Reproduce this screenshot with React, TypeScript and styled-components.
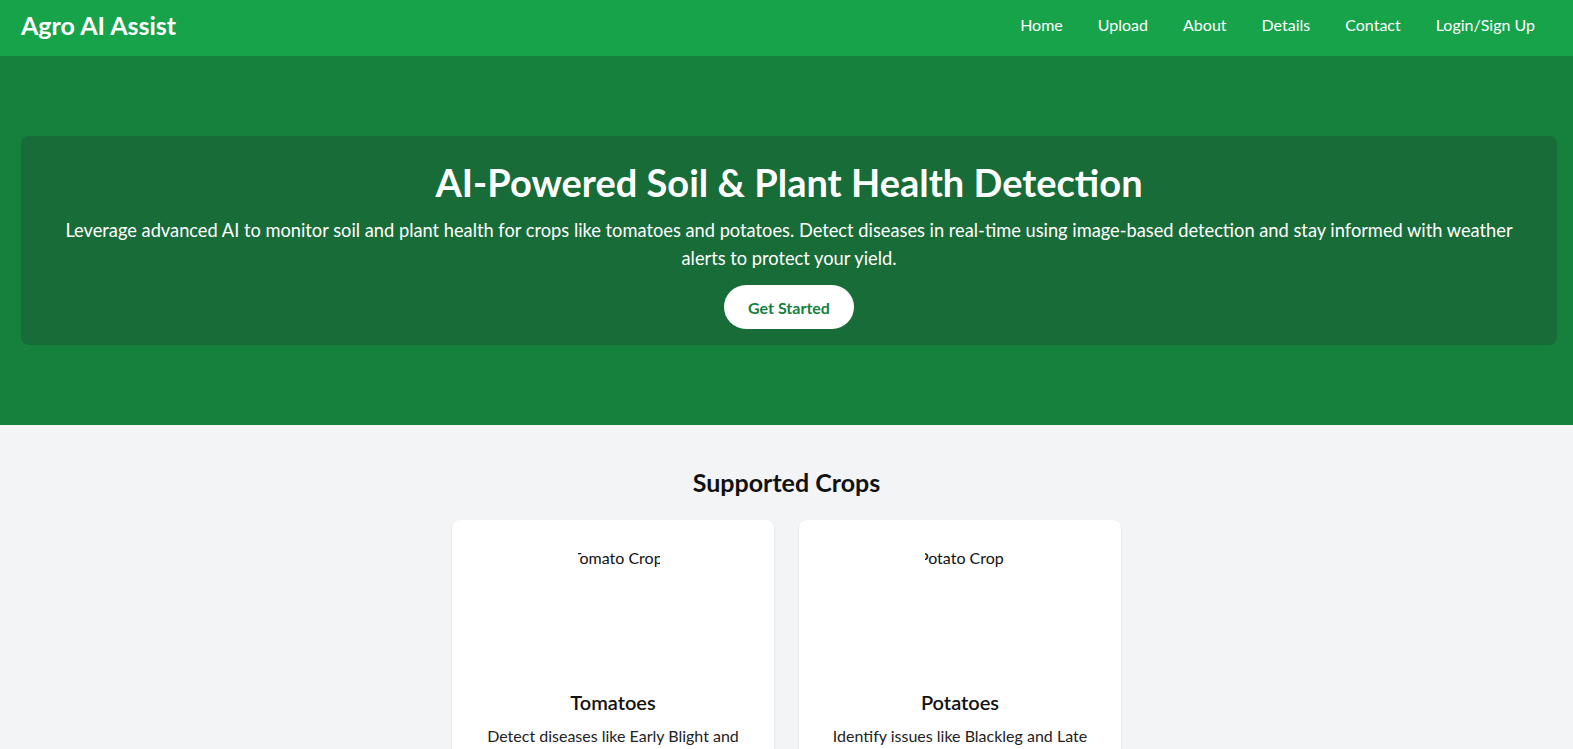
import React from 'react';
import styled, { createGlobalStyle } from 'styled-components';

const GlobalStyle = createGlobalStyle`
  * { box-sizing: border-box; }
  body {
    margin: 0;
    background: #f3f4f6;
    font-family: Lato, "Noto Sans", "Liberation Sans", sans-serif;
    color: #111;
  }
`;

interface ICrop {
  alt: string;
  name: string;
  text: string;
}

const crops: ICrop[] = [
  { alt: 'Tomato Crop', name: 'Tomatoes', text: 'Detect diseases like Early Blight and Late Blight in tomato leaves.' },
  { alt: 'Potato Crop', name: 'Potatoes', text: 'Identify issues like Blackleg and Late Blight in potato plants.' },
];

const links = ['Home', 'Upload', 'About', 'Details', 'Contact', 'Login/Sign Up'];

const CropCard: React.FC<{ crop: ICrop }> = ({ crop }) => (
  <Card>
    <ImgBox>
      <AltText>{crop.alt}</AltText>
    </ImgBox>
    <CardTitle>{crop.name}</CardTitle>
    <CardText>{crop.text}</CardText>
  </Card>
);

const App: React.FC = () => {
  return (
    <>
      <GlobalStyle />
      <Nav>
        <Logo>Agro AI Assist</Logo>
        <NavLinks>
          {links.map(l => (
            <NavLink key={l}>{l}</NavLink>
          ))}
        </NavLinks>
      </Nav>
      <Hero>
        <HeroBox>
          <HeroTitle>AI-Powered Soil &amp; Plant Health Detection</HeroTitle>
          <HeroText>
            Leverage advanced AI to monitor soil and plant health for crops like tomatoes and potatoes. Detect diseases in
            real-time using image-based detection and stay informed with weather alerts to protect your yield.
          </HeroText>
          <StartButton>Get Started</StartButton>
        </HeroBox>
      </Hero>
      <Crops>
        <SectionTitle>Supported Crops</SectionTitle>
        <CardRow>
          {crops.map(c => (
            <CropCard key={c.name} crop={c} />
          ))}
        </CardRow>
      </Crops>
    </>
  );
};
export default App;

const Nav = styled.nav`
  height: 56px;
  background: #17a34a;
  display: flex;
  align-items: center;
  justify-content: space-between;
  padding: 0 38px 0 21px;
  color: #fff;
`;

const Logo = styled.div`
  font-size: 25px;
  font-weight: 700;
  margin-top: -6px;
`;

const NavLinks = styled.div`
  display: flex;
  gap: 35px;
  margin-top: -8px;
`;

const NavLink = styled.a`
  font-size: 16px;
  color: #fff;
  cursor: pointer;
`;

const Hero = styled.section`
  background: #16803d;
  padding: 80px 16px 80px 21px;
`;

const HeroBox = styled.div`
  width: 1536px;
  max-width: 100%;
  background: #176c38;
  border-radius: 8px;
  padding: 24px 24px 16px;
  text-align: center;
  color: #fff;
`;

const HeroTitle = styled.h1`
  margin: 0 0 12px;
  font-size: 38px;
  line-height: 44px;
  font-weight: 700;
`;

const HeroText = styled.p`
  margin: 0 0 13px;
  font-size: 18.25px;
  line-height: 28px;
  padding: 0 20px;
`;

const StartButton = styled.button`
  height: 44px;
  width: 130px;
  border: none;
  border-radius: 999px;
  background: #fff;
  color: #15803d;
  font-family: inherit;
  font-size: 16px;
  font-weight: 700;
  cursor: pointer;
`;

const Crops = styled.section`
  padding: 40px 16px;
`;

const SectionTitle = styled.h2`
  margin: 0 0 21px;
  text-align: center;
  font-size: 25px;
  line-height: 34px;
  font-weight: 700;
`;

const CardRow = styled.div`
  display: flex;
  justify-content: center;
  gap: 25px;
`;

const Card = styled.div`
  width: 322px;
  background: #fff;
  border-radius: 8px;
  box-shadow: 0 1px 3px rgba(0, 0, 0, 0.08), 0 1px 2px rgba(0, 0, 0, 0.04);
  padding: 24px;
  text-align: center;
`;

/* broken image: only a clipped strip of the alt text shows */
const ImgBox = styled.div`
  width: 82px;
  height: 128px;
  margin: 0 0 16px 102px;
  overflow: hidden;
  display: flex;
  justify-content: flex-start;
`;

const AltText = styled.span`
  margin-left: -6px;
  font-size: 16px;
  line-height: 27px;
  white-space: nowrap;
  color: #111;
`;

const CardTitle = styled.h3`
  margin: 0 0 8px;
  font-size: 20px;
  line-height: 28px;
  font-weight: 600;
`;

const CardText = styled.p`
  margin: 0;
  font-size: 16px;
  line-height: 24px;
  color: #222;
  padding: 0 8px;
`;
